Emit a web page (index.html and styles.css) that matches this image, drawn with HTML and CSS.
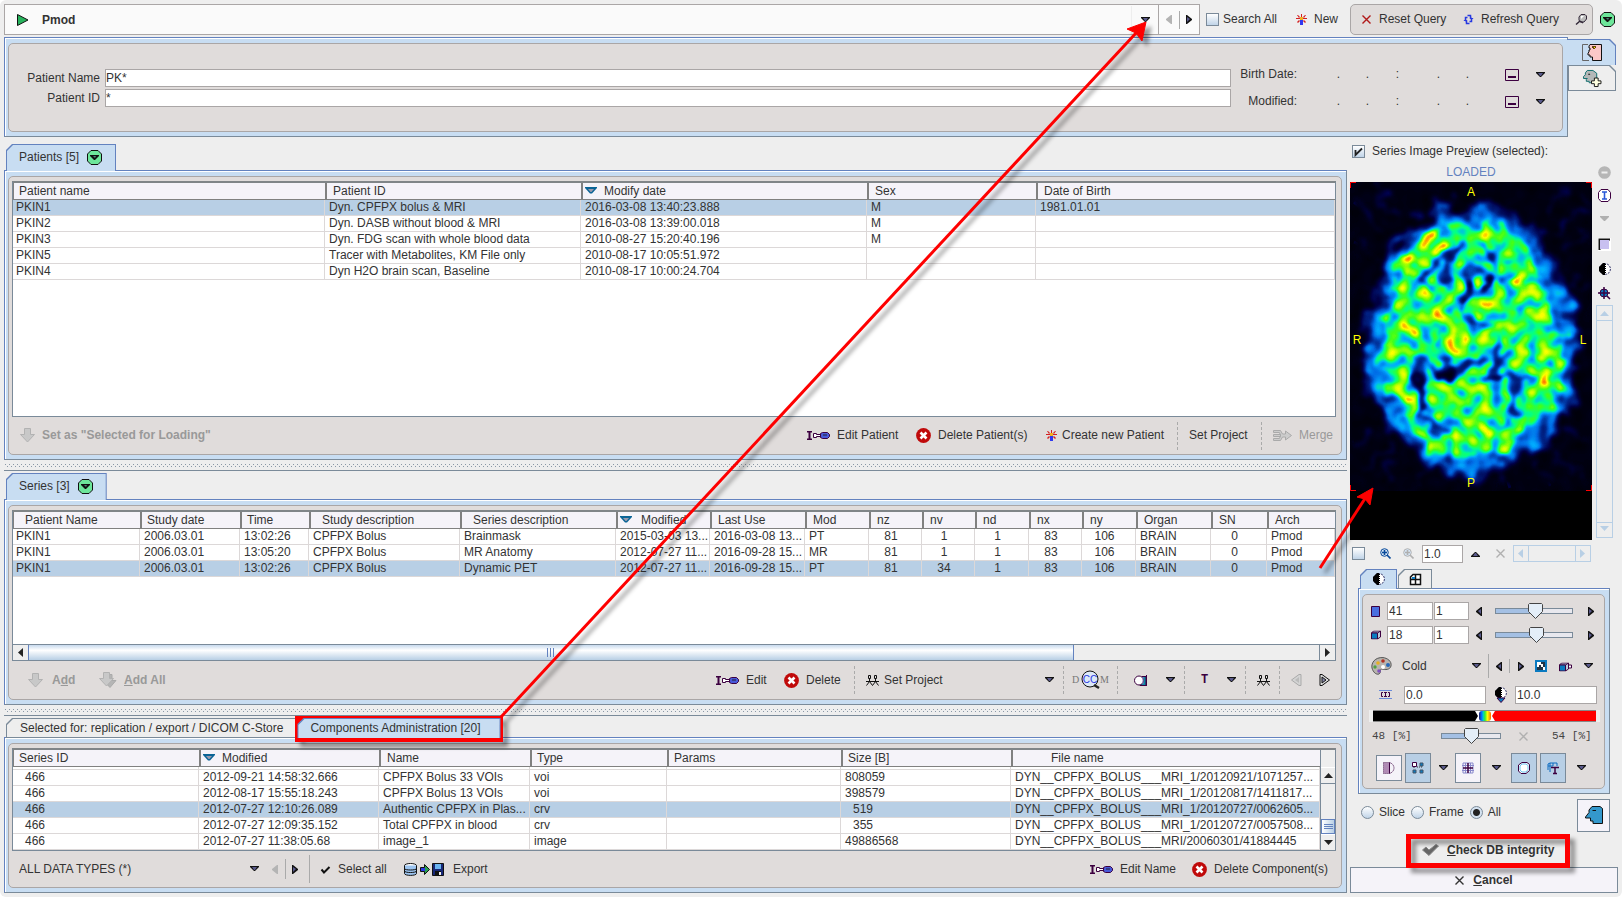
FILE: index.html
```html
<!DOCTYPE html>
<html lang="en">
<head>
<meta charset="utf-8">
<title>Pmod database</title>
<link rel="stylesheet" href="styles.css">
</head>
<body>
<svg class="defs" aria-hidden="true">
  <defs>
    <symbol id="down" viewBox="0 0 9 6"><path d="M0 0h9v1L5 5H4L0 1z" fill="#111"/><path d="M2 1h5L5 4H4z" fill="#5a5a8c"/></symbol>
    <symbol id="up" viewBox="0 0 9 6"><path d="M0 6h9V5L5 1H4L0 5z" fill="#111"/><path d="M2 5h5L5 2H4z" fill="#5a5a8c"/></symbol>
    <symbol id="left" viewBox="0 0 6 9"><path d="M6 0v9H5L0 5V4l5-4z" fill="#111"/><path d="M5 2v5L2 4z" fill="#5a5a8c"/></symbol>
    <symbol id="right" viewBox="0 0 6 9"><path d="M0 0v9h1l5-4V4L1 0z" fill="#111"/><path d="M1 2v5l3-3z" fill="#5a5a8c"/></symbol>
    <symbol id="left-off" viewBox="0 0 6 9"><path d="M6 0v9H5L0 5V4l5-4z" fill="#b4b4b4"/></symbol>
    <symbol id="drop" viewBox="0 0 15 15"><path d="M4 0.5h7L14.500 4v7L11 14.500H4L0.500 11V4z" fill="#6de69a" stroke="#111"/><path d="M3 5h9v1L8 10H7L3 6z" fill="#111"/><path d="M6 6h3L8 8z" fill="#487"/></symbol>
    <symbol id="star" viewBox="0 0 11 11"><path d="M5 0h1v3H5zM1 1l1 0 2 2-1 1zM10 1H9L7 3l1 1zM0 4h4v1H0zM7 4h4v1H7zM1 8l2-2 1 1-2 2zM10 8L8 6 7 7l2 2z" fill="#d42020"/><path d="M4 3h3v3H4z" fill="#f0b020"/><path d="M4 6h3v5H4z" fill="#3038f0"/></symbol>
    <symbol id="edit" viewBox="0 0 23 9"><path d="M0 0h5v1.500H3.500v6H5V9H0V7.500h1.500v-6H0z" fill="#3c0040"/><path d="M6.500 2.500h3v1h4v2h-4v1h-3z" fill="#fff" stroke="#3c0040"/><path d="M13.500 2.500l2-1h5l2 2v2l-2 2h-5l-2-1z" fill="#4858d8" stroke="#3c0040"/><path d="M16 4h4" stroke="#223"/></symbol>
    <symbol id="del" viewBox="0 0 15 15"><circle cx="7.500" cy="7.500" r="7.400" fill="#c00a0a"/><path d="M4.500 4.500l6 6m0-6l-6 6" stroke="#fff" stroke-width="2.600"/></symbol>
    <symbol id="arrow" viewBox="0 0 15 15"><path d="M4.500 0.500h6v6h4L7.500 14 .5 6.500h4z" fill="#c8c8c8" stroke="#b2b2b2"/></symbol>
    <symbol id="arrow2" viewBox="0 0 18 16"><path d="M8 2.500h5v6h4L11 15.500 5 9z" fill="#b5b5b5" stroke="#aaa"/><path d="M4.500 0.500h6v6h4L7.500 14 .5 6.500h4z" fill="#c8c8c8" stroke="#b2b2b2"/></symbol>
    <symbol id="merge" viewBox="0 0 19 11"><path d="M.5.500h7l2 3.500h3V1l6 4.500-6 4.500V7h-3l-2 3.500h-7v-2h6l1-3-1-3h-6zM.5 4.500h7v2h-7z" fill="#ccc" stroke="#aaa"/></symbol>
    <symbol id="sort" viewBox="0 0 12 7"><path d="M0 0h12v1L7 6.500H5L0 1z" fill="#0a6496"/><path d="M3 2h6L6.500 5h-1z" fill="#9a9aae"/></symbol>
    <symbol id="people" viewBox="0 0 13 11"><path d="M2.500.5h2v3h-2zM8.500.5h2v3h-2zM3.500 3v3M9.500 3v3M0 6.500h13M3.500 6.500L.5 10.500M3.500 6.500l3 4M9.500 6.500l-3 4M9.500 6.500l3 4" fill="none" stroke="#111"/></symbol>
    <symbol id="x" viewBox="0 0 9 9"><path d="M.5.5l8 8m0-8l-8 8" stroke="currentColor" stroke-width="1.400"/></symbol>
    <symbol id="half" viewBox="0 0 12 12"><circle cx="6" cy="6" r="5.400" fill="#fff" stroke="#336" stroke-dasharray="2 1"/><path d="M6 0H4L0 4v4l4 4h2z" fill="#000"/><path d="M6.500 1v10" stroke="#000" stroke-dasharray="1 1"/></symbol>
    <symbol id="cube" viewBox="0 0 10 9"><path d="M.5 2.500l2-2h7v6l-3 2v-6z" fill="#bcd" stroke="#3c0040"/><path d="M6.500 2.500l3-2" stroke="#3c0040"/><path d="M.5 2.500h6v6h-6z" fill="#0a7ac0" stroke="#3c0040"/></symbol>
    <symbol id="calendar" viewBox="0 0 14 12"><path d="M.5.5h13v11H.5z" fill="none" stroke="#3c0040"/><path d="M3 7h8v2H3z" fill="#3c0040"/></symbol>
    <symbol id="glass" viewBox="0 0 11 11"><circle cx="4.500" cy="4.500" r="3.800" fill="#d6e6f6" stroke="currentColor"/><path d="M2 4.500h5M4.500 2v5M7 7l3.500 3.500" stroke="currentColor" stroke-width="1.600"/></symbol>

    <filter id="scan" x="0" y="0" width="100%" height="100%" color-interpolation-filters="sRGB">
      <feTurbulence type="fractalNoise" baseFrequency="0.055" numOctaves="2" seed="4" result="warp"/>
      <feDisplacementMap in="SourceGraphic" in2="warp" scale="34" xChannelSelector="R" yChannelSelector="G"/>
      <feGaussianBlur stdDeviation="2" result="warped"/>
      <feFlood flood-color="#060606"/>
      <feComposite in="warped" operator="over" in2="SourceGraphic" result="soft"/>
      <feTurbulence type="fractalNoise" baseFrequency="0.085" numOctaves="1" seed="11"/>
      <feColorMatrix values="1 0 0 0 0  1 0 0 0 0  1 0 0 0 0  0 0 0 0 1" result="noise"/>
      <feComposite in="soft" in2="noise" operator="arithmetic" k1="1.6" k2="0.2" k3="0" k4="0"/>
      <feComponentTransfer>
        <feFuncR type="table" tableValues="0 0 0 0 0 0 .25 .65 1 1 1"/>
        <feFuncG type="table" tableValues="0 0 .15 .42 .68 1 1 1 1 .6 .1"/>
        <feFuncB type="table" tableValues="0 .28 .55 .9 1 .55 .1 0 0 0 0"/>
      </feComponentTransfer>
    </filter>
  </defs>
</svg>

<header class="topbar">
  <div class="source">
    <svg class="play" viewBox="0 0 12 12"><path d="M.5 .5L11 6 .5 11.500z" fill="#26b35c" stroke="#111"/></svg>
    <select class="source-select" aria-label="Database"><option>Pmod</option></select>
    <span class="source-drop"><svg class="c9"><use href="#down"/></svg></span>
  </div>
  <div class="stepper">
    <button aria-label="Previous"><svg class="c6"><use href="#left-off"/></svg></button>
    <button aria-label="Next"><svg class="c6"><use href="#right"/></svg></button>
  </div>
  <label class="check-label search-all"><input type="checkbox">Search All</label>
  <button class="btn new"><svg class="i11"><use href="#star"/></svg>New</button>
  <div class="query">
    <button class="btn reset"><svg class="i9"><use href="#x"/></svg>Reset Query</button>
    <button class="btn refresh"><svg class="i11" viewBox="0 0 11 11"><path d="M2.500 5V3.500h2M4.500 1.500h3v2h1M8.500 6v1.500h-2M6.500 9.500h-3v-2h-1" fill="none" stroke="#2638e0" stroke-width="1.500"/><path d="M6.500 4h4L8.500 6.500zM.5 7h4L2.500 4.500z" fill="#2638e0"/></svg>Refresh Query</button>
    <button class="btn" aria-label="Pin"><svg class="i11" viewBox="0 0 11 11"><path d="M5 .5h4l1.500 1.500v3L8 8H4L3 6V3z" fill="#bbb" stroke="#332838"/><path d="M5 2h3L5 5z" fill="#fff"/><path d="M4 7l3 2M0 10.500L4 7" stroke="#332838" stroke-width="1.500"/></svg></button>
  </div>
  <button class="btn more" aria-label="More"><svg class="i15"><use href="#drop"/></svg></button>
</header>

<section class="search">
  <div class="frame search-frame">
    <div class="inner search-inner">
      <div class="fields">
        <label for="pname">Patient Name</label><input id="pname" type="text" value="PK*">
        <label for="pid">Patient ID</label><input id="pid" type="text" value="*">
      </div>
      <div class="dates">
        <div class="date"><span class="date-name">Birth Date:</span><span>.</span><span>.</span><span>:</span><span>.</span><span>.</span><button aria-label="Birth date calendar"><svg class="cal"><use href="#calendar"/></svg></button><button aria-label="Birth date options"><svg class="c9"><use href="#down"/></svg></button></div>
        <div class="date"><span class="date-name">Modified:</span><span>.</span><span>.</span><span>:</span><span>.</span><span>.</span><button aria-label="Modified calendar"><svg class="cal"><use href="#calendar"/></svg></button><button aria-label="Modified options"><svg class="c9"><use href="#down"/></svg></button></div>
      </div>
    </div>
  </div>
  <div class="side-tabs">
    <button class="tab side on" aria-label="Patient"><svg viewBox="0 0 20 17"><path d="M6 .5H.5v16H7" fill="none" stroke="#666"/><path d="M8 .5h11.500v16h-9V13H8v-2H6V9l1-1V6h1V4H7V2z" fill="#fbc8c8" stroke="#111"/><path d="M10 2h4v2h-1v1h-2V4h-1z" fill="#641"/><path d="M12 3h1v1h-1z" fill="#ff0"/></svg></button>
    <button class="tab side" aria-label="Add patient"><svg viewBox="0 0 20 18"><path d="M5 .5h6l4 3v10H7V12H4v-2l1-1H1V7l2-2V3z" fill="#b4b8b8" stroke="#0a6a6a"/><path d="M6 4h2v1H6z" fill="#111"/><path d="M12.500 8.500h4v3h3v3h-3v3h-4v-3h-3v-3h3z" fill="#ffffe0" stroke="#111"/></svg></button>
  </div>
</section>

<main class="main">
  <div class="left">
    <section class="block grow">
      <div class="tabs"><button class="tab on">Patients [5]<svg class="i15"><use href="#drop"/></svg></button></div>
      <div class="frame">
        <div class="inner">
          <div class="well patients-well">
            <table class="grid">
              <colgroup><col class="w312"><col class="w256"><col class="w286"><col class="w169"><col></colgroup>
              <thead><tr><th>Patient name</th><th>Patient ID</th><th><svg class="sort"><use href="#sort"/></svg>Modify date</th><th>Sex</th><th>Date of Birth</th></tr></thead>
              <tbody>
                <tr class="sel"><td>PKIN1</td><td>Dyn. CPFPX bolus &amp; MRI</td><td>2016-03-08 13:40:23.888</td><td>M</td><td>1981.01.01</td></tr>
                <tr><td>PKIN2</td><td>Dyn. DASB without blood &amp; MRI</td><td>2016-03-08 13:39:00.018</td><td>M</td><td></td></tr>
                <tr><td>PKIN3</td><td>Dyn. FDG scan with whole blood data</td><td>2010-08-27 15:20:40.196</td><td>M</td><td></td></tr>
                <tr><td>PKIN5</td><td>Tracer with Metabolites, KM File only</td><td>2010-08-17 10:05:51.972</td><td></td><td></td></tr>
                <tr><td>PKIN4</td><td>Dyn H2O brain scan, Baseline</td><td>2010-08-17 10:00:24.704</td><td></td><td></td></tr>
              </tbody>
            </table>
          </div>
          <div class="tools patients-tools">
            <button class="btn off bold lead" disabled><svg class="i15"><use href="#arrow"/></svg>Set as "Selected for Loading"</button>
            <button class="btn"><svg class="i23"><use href="#edit"/></svg>Edit Patient</button>
            <button class="btn"><svg class="i15"><use href="#del"/></svg>Delete Patient(s)</button>
            <button class="btn tight"><svg class="i11"><use href="#star"/></svg>Create new Patient</button>
            <button class="btn sep">Set Project</button>
            <button class="btn sep off" disabled><svg class="i19"><use href="#merge"/></svg>Merge</button>
          </div>
        </div>
      </div>
    </section>
    <div class="splitter"></div>
    <section class="block">
      <div class="tabs"><button class="tab on">Series [3]<svg class="i15"><use href="#drop"/></svg></button></div>
      <div class="frame">
        <div class="inner">
          <div class="well series-well">
            <table class="grid">
              <colgroup><col class="w127"><col class="w100"><col class="w69"><col class="w151"><col class="w156"><col class="w94"><col class="w95"><col class="w64"><col class="w53"><col class="w53"><col class="w54"><col class="w53"><col class="w54"><col class="w75"><col class="w56"><col></colgroup>
              <thead><tr><th class="far">Patient Name</th><th class="near">Study date</th><th class="near">Time</th><th class="far">Study description</th><th class="far">Series description</th><th><svg class="sort wide"><use href="#sort"/></svg>Modified</th><th>Last Use</th><th>Mod</th><th>nz</th><th>nv</th><th>nd</th><th>nx</th><th>ny</th><th>Organ</th><th>SN</th><th>Arch</th></tr></thead>
              <tbody>
                <tr><td>PKIN1</td><td>2006.03.01</td><td>13:02:26</td><td>CPFPX Bolus</td><td>Brainmask</td><td>2015-03-03 13...</td><td>2016-03-08 13...</td><td>PT</td><td class="num">81</td><td class="num">1</td><td class="num">1</td><td class="num">83</td><td class="num">106</td><td>BRAIN</td><td class="num">0</td><td>Pmod</td></tr>
                <tr><td>PKIN1</td><td>2006.03.01</td><td>13:05:20</td><td>CPFPX Bolus</td><td>MR Anatomy</td><td>2012-07-27 11...</td><td>2016-09-28 15...</td><td>MR</td><td class="num">81</td><td class="num">1</td><td class="num">1</td><td class="num">83</td><td class="num">106</td><td>BRAIN</td><td class="num">0</td><td>Pmod</td></tr>
                <tr class="sel"><td>PKIN1</td><td>2006.03.01</td><td>13:02:26</td><td>CPFPX Bolus</td><td>Dynamic PET</td><td>2012-07-27 11...</td><td>2016-09-28 15...</td><td>PT</td><td class="num">81</td><td class="num">34</td><td class="num">1</td><td class="num">83</td><td class="num">106</td><td>BRAIN</td><td class="num">0</td><td>Pmod</td></tr>
              </tbody>
            </table>
            <div class="hscroll">
              <button aria-label="Scroll left"><svg class="c6" viewBox="0 0 6 9"><path d="M5 0v9L0 4.500z" fill="#222"/></svg></button>
              <div class="hthumb"><i></i><i></i><i></i></div>
              <div class="htrack"></div>
              <button aria-label="Scroll right"><svg class="c6" viewBox="0 0 6 9"><path d="M0 0v9l5-4.500z" fill="#222"/></svg></button>
            </div>
          </div>
          <div class="tools series-tools">
            <button class="btn off bold add" disabled><svg class="i15"><use href="#arrow"/></svg><span>A<u>d</u>d</span></button>
            <button class="btn off bold" disabled><svg class="i18"><use href="#arrow2"/></svg><span><u>A</u>dd All</span></button>
            <button class="btn"><svg class="i23"><use href="#edit"/></svg>Edit</button>
            <button class="btn"><svg class="i15"><use href="#del"/></svg>Delete</button>
            <div class="sep pair"><button class="btn tight"><svg class="i13"><use href="#people"/></svg>Set Project</button><button aria-label="Project list"><svg class="c9"><use href="#down"/></svg></button></div>
            <button class="btn sep dicom-button" aria-label="DICOM"><svg class="dicom" viewBox="0 0 36 18"><circle cx="18" cy="8" r="8" fill="#dce8f8" stroke="#111"/><path d="M22 14l5 3" stroke="#222" stroke-width="2.500"/><text x="0" y="12" class="dicom-grey">D</text><text x="18" y="12" class="dicom-blue">CC</text><text x="28" y="12" class="dicom-grey">M</text></svg></button>
            <div class="sep pair"><button aria-label="Volume"><svg class="i13" viewBox="0 0 13 11"><path d="M8 1.500h4v9H6z" fill="#0a8aa6" stroke="#3c0040"/><path d="M12.500 0v11" stroke="#3c0040"/><circle cx="5" cy="5.500" r="4.500" fill="#fff" stroke="#3c0040"/><path d="M9 2v7" stroke="#88c"/></svg></button><button aria-label="Volume options"><svg class="c9"><use href="#down"/></svg></button></div>
            <div class="sep pair"><button class="letter">T</button><button aria-label="Text options"><svg class="c9"><use href="#down"/></svg></button></div>
            <button class="btn sep" aria-label="Patients"><svg class="i13"><use href="#people"/></svg></button>
            <div class="sep pair"><button aria-label="Previous"><svg class="nav" viewBox="0 0 11 12"><path d="M10 .5v11H8L.5 6 8 .5z" fill="#d4d4d4" stroke="#aaa"/><path d="M8 3v6L4 6z" fill="#bbb"/></svg></button><button aria-label="Next"><svg class="nav" viewBox="0 0 11 12"><path d="M1 .5v11h2L10.500 6 3 .5z" fill="#ddd" stroke="#111"/><path d="M3 3v6l4-3z" fill="#88a" stroke="#111"/></svg></button></div>
          </div>
        </div>
      </div>
    </section>
    <div class="splitter"></div>
    <section class="block">
      <div class="tabs low"><button class="tab">Selected for: replication / export / DICOM C-Store</button><button class="tab on">Components Administration [20]</button></div>
      <div class="frame">
        <div class="inner">
          <div class="well comp-well">
            <table class="grid">
              <colgroup><col class="w186"><col class="w180"><col class="w151"><col class="w137"><col class="w174"><col class="w170"><col></colgroup>
              <thead><tr><th>Series ID</th><th><svg class="sort"><use href="#sort"/></svg>Modified</th><th>Name</th><th class="near">Type</th><th class="near">Params</th><th class="near">Size [B]</th><th class="file">File name</th></tr></thead>
              <tbody>
                <tr class="cut"><td></td><td></td><td></td><td></td><td></td><td></td><td></td></tr>
                <tr><td class="ind">466</td><td>2012-09-21 14:58:32.666</td><td>CPFPX Bolus 33 VOIs</td><td>voi</td><td></td><td>808059</td><td>DYN__CPFPX_BOLUS___MRI_1/20120921/1071257...</td></tr>
                <tr><td class="ind">466</td><td>2012-08-17 15:55:18.243</td><td>CPFPX Bolus 13 VOIs</td><td>voi</td><td></td><td>398579</td><td>DYN__CPFPX_BOLUS___MRI_1/20120817/1411817...</td></tr>
                <tr class="sel"><td class="ind">466</td><td>2012-07-27 12:10:26.089</td><td>Authentic CPFPX in Plas...</td><td>crv</td><td></td><td class="ind">519</td><td>DYN__CPFPX_BOLUS___MRI_1/20120727/0062605...</td></tr>
                <tr><td class="ind">466</td><td>2012-07-27 12:09:35.152</td><td>Total CPFPX in blood</td><td>crv</td><td></td><td class="ind">355</td><td>DYN__CPFPX_BOLUS___MRI_1/20120727/0057508...</td></tr>
                <tr><td class="ind">466</td><td>2012-07-27 11:38:05.68</td><td>image_1</td><td>image</td><td></td><td>49886568</td><td>DYN__CPFPX_BOLUS___MRI/20060301/41884445</td></tr>
              </tbody>
            </table>
            <div class="vscroll">
              <button aria-label="Scroll up"><svg class="c9" viewBox="0 0 9 6"><path d="M0 5h9L4.500 0z" fill="#222"/></svg></button>
              <div class="vtrack"></div><div class="vthumb"><i></i><i></i><i></i></div>
              <button aria-label="Scroll down"><svg class="c9" viewBox="0 0 9 6"><path d="M0 0h9L4.500 5z" fill="#222"/></svg></button>
            </div>
          </div>
          <div class="tools comp-tools">
            <div class="types"><select aria-label="Data types"><option>ALL DATA TYPES (*)</option></select><svg class="c9"><use href="#down"/></svg></div>
            <button class="step" aria-label="Previous type"><svg class="c6"><use href="#left-off"/></svg></button>
            <button class="step line" aria-label="Next type"><svg class="c6"><use href="#right"/></svg></button>
            <button class="btn line all"><svg class="i9" viewBox="0 0 9 9"><path d="M.5 4.500L3 7.500 8.500 2" fill="none" stroke="#111" stroke-width="2"/></svg>Select all</button>
            <button class="btn"><svg class="export" viewBox="0 0 40 13"><ellipse cx="6.500" cy="2.500" rx="6" ry="2" fill="#fff" stroke="#111"/><path d="M.5 2.500v8c0 2.500 12 2.500 12 0v-8M.5 5.500c0 2 12 2 12 0M.5 8c0 2 12 2 12 0" fill="#9cc4f0" stroke="#111"/><path d="M16.500 4.500h4V1.500l5 5-5 5v-3h-4z" fill="#28a050" stroke="#111"/><path d="M17 5h4v3h-4z" fill="#2838e0"/><path d="M28.500 .5h11v12h-11z" fill="#182878" stroke="#111"/><path d="M31 1h6v5h-6z" fill="#6ab4f0"/><path d="M31 8h6v4h-6z" fill="#111"/><path d="M35 9h2v3h-2z" fill="#eee"/></svg>Export</button>
            <button class="btn"><svg class="i23"><use href="#edit"/></svg>Edit Name</button>
            <button class="btn"><svg class="i15"><use href="#del"/></svg>Delete Component(s)</button>
          </div>
        </div>
      </div>
    </section>
  </div>

  <aside class="right">
    <label class="check-label preview-label"><input type="checkbox" checked><span>Series Image Pre<u>v</u>iew (selected):</span></label>
    <div class="viewer">
      <div class="picture">
        <div class="loaded">LOADED</div>
        <svg class="brain" viewBox="0 0 242 358">
          <rect width="242" height="358" fill="#000"/>
          <g filter="url(#scan)">
            <rect width="242" height="309" fill="#060606"/>
            <g stroke="#1c1c1c" stroke-width="3">
              <path d="M4 20l30 26M20 4l24 30M4 60l24 14M236 14l-24 34M238 54l-26 14M214 6l-14 24M2 260l26-12M10 290l30-26M34 300l14-20M70 304l6-18M238 262l-24-14M230 292l-24-24M200 304l-12-24M160 306l-6-18M10 100l14 4M236 100l-12 4"/>
            </g>
            <path d="M85 24L100 20L115 34L130 18L148 26L172 38L190 55L200 76L212 95L222 120L226 150L231 165L226 190L220 215L210 238L196 264L178 272L160 284L140 288L122 296L102 288L80 284L62 268L42 252L28 225L18 200L12 175L15 150L22 125L34 100L40 74L54 54L72 40z" fill="#4c4c4c" stroke="#262626" stroke-width="5"/>
            <path d="M62 68L76 52L100 46L120 52L140 44L160 50L178 65L184 90L196 120L208 150L212 175L206 210L195 232L172 252L150 266L120 270L92 276L75 258L57 235L42 210L34 180L38 145L46 118L52 90z" fill="#8e8e8e" stroke="#8e8e8e" stroke-width="6" stroke-linejoin="round"/>
            <g fill="none" stroke="#343434" stroke-width="8" stroke-linecap="round">
              <path d="M104 70c-12 8-24 8-27 22M93 84v12M84 108l-6 -14M140 62c0 18 14 26 10 40M124 88l-10 22"/>
              <path d="M150 104l10-10M96 152l-12 10M116 136c10 6 18 4 26 4" stroke-width="6"/>
              <path d="M68 182c8 14-4 32 6 52" stroke-width="12"/><path d="M76 176l18 16 20-6 20-10" stroke-width="8"/>
              <path d="M140 192l38 2M166 196c4 14-6 20-2 34M148 168v14" stroke-width="11"/>
              <path d="M80 240l10 14M153 238v4" stroke-width="9"/>
            </g>
            <g fill="#0c0c0c"><ellipse cx="96" cy="194" rx="8" ry="6"/><ellipse cx="72" cy="210" rx="4" ry="14"/><ellipse cx="150" cy="194" rx="7" ry="5"/><ellipse cx="106" cy="66" rx="4" ry="4"/>
            <ellipse cx="137" cy="99" rx="6" ry="7"/><ellipse cx="116" cy="116" rx="5" ry="6"/><ellipse cx="116" cy="128" rx="6" ry="5"/></g>
            <g fill="#b4b4b4">
              <ellipse cx="134" cy="118" rx="8" ry="11"/><ellipse cx="86" cy="60" rx="11" ry="7"/><ellipse cx="60" cy="84" rx="7" ry="7"/>
              <ellipse cx="108" cy="162" rx="6" ry="16" transform="rotate(30 108 162)"/><ellipse cx="174" cy="102" rx="11" ry="5"/>
              <ellipse cx="46" cy="214" rx="7" ry="7"/><ellipse cx="194" cy="196" rx="6" ry="8"/><ellipse cx="135" cy="243" rx="5" ry="7"/>
              <ellipse cx="104" cy="264" rx="6" ry="9"/><ellipse cx="118" cy="258" rx="5" ry="9"/><ellipse cx="149" cy="266" rx="5" ry="5"/>
              <ellipse cx="58" cy="146" rx="8" ry="6"/><ellipse cx="182" cy="124" rx="5" ry="7"/><ellipse cx="86" cy="140" rx="5" ry="9"/>
              <ellipse cx="152" cy="144" rx="6" ry="7"/><ellipse cx="184" cy="170" rx="7" ry="5"/><ellipse cx="55" cy="108" rx="4" ry="11"/>
            </g>
            <g fill="#e8e8e8"><ellipse cx="132" cy="119" rx="3" ry="5"/><ellipse cx="102" cy="170" rx="3" ry="3"/></g>
          </g>
          <rect y="309" width="242" height="49" fill="#000"/>
          <path d="M.5 6V.5H6M236 .5h5.500V6M.5 303v5.500H6M236 308.500h5.500V303" fill="none" stroke="#f00" stroke-width="1"/>
          <text x="121" y="14" class="mark">A</text><text x="7" y="162" class="mark">R</text><text x="233" y="162" class="mark">L</text><text x="121" y="305" class="mark">P</text>
        </svg>
      </div>
      <div class="strip">
        <button aria-label="Remove"><svg class="i13" viewBox="0 0 13 13"><circle cx="6.500" cy="6.500" r="6.300" fill="#b6b6b6"/><path d="M3.500 6.500h6" stroke="#eee" stroke-width="2"/></svg></button>
        <button aria-label="Info"><svg class="i13" viewBox="0 0 13 13"><path d="M3 .5h7l2.500 3v6l-2.500 3H3l-2.500-3v-6z" fill="#fff" stroke="#3c0040"/><path d="M4 3h5M4 10h5M6.500 3v7" stroke="#2a58d8" stroke-width="1.600"/></svg></button>
        <button aria-label="More"><svg class="c9" viewBox="0 0 9 6"><path d="M0 0h9v1L5 5H4L0 1z" fill="#b0b0b0"/></svg></button>
        <button aria-label="Background"><svg class="i13" viewBox="0 0 13 13"><path d="M0 0h13v13H0z" fill="#fff"/><path d="M1.500 12V1.500H12" fill="none" stroke="#111" stroke-width="2"/><path d="M2 2h9v9H2z" fill="#c8c0f0"/></svg></button>
        <button aria-label="Contrast"><svg class="i12"><use href="#half"/></svg></button>
        <button aria-label="Target"><svg class="i13" viewBox="0 0 13 13"><circle cx="6" cy="6" r="4" fill="#0a7ac0" stroke="#3c0040"/><path d="M0 6h12M6 0v12M9 9l3 3" stroke="#3c0040" stroke-width="1.500"/></svg></button>
        <div class="vbar"><svg class="c9" viewBox="0 0 9 6"><path d="M0 5h9L4.500 0z"/></svg><svg class="c9" viewBox="0 0 9 6"><path d="M0 0h9L4.500 5z"/></svg></div>
      </div>
    </div>
    <div class="zoom">
      <input type="checkbox" aria-label="Zoom lock">
      <button class="zin" aria-label="Zoom in"><svg class="i11"><use href="#glass"/></svg></button>
      <button class="zout" aria-label="Zoom out"><svg class="i11"><use href="#glass"/></svg></button>
      <input type="text" value="1.0" aria-label="Zoom">
      <button aria-label="Zoom step"><svg class="c9"><use href="#up"/></svg></button>
      <button class="zout" aria-label="Clear zoom"><svg class="i9"><use href="#x"/></svg></button>
      <div class="hbar"><svg class="c6" viewBox="0 0 6 9"><path d="M5 0v9L0 4.500z"/></svg><svg class="c6" viewBox="0 0 6 9"><path d="M0 0v9l5-4.500z"/></svg></div>
    </div>
    <div class="colours">
      <div class="tabs"><button class="tab on" aria-label="Colour"><svg class="i12"><use href="#half"/></svg></button><button class="tab" aria-label="Layout"><svg class="i11" viewBox="0 0 11 11"><path d="M.5 3L3 .5h7.500v10H.5zM5.500 0v11M0 5.500h11" fill="#fff" stroke="#111" stroke-width="1.500"/><path d="M2 3h3v2H2z" fill="#0a7ac0"/></svg></button></div>
      <div class="frame">
        <div class="inner colour-inner">
          <div class="slice-row">
            <svg class="slab" viewBox="0 0 9 11"><path d="M.5.5h8v10h-8z" fill="#4a6ee0" stroke="#3c0040"/></svg>
            <input type="text" value="41" aria-label="Slice"><input type="text" value="1" aria-label="Slice step">
            <button aria-label="Previous slice"><svg class="c6"><use href="#left"/></svg></button>
            <input type="range" value="52" aria-label="Slice position">
            <button aria-label="Next slice"><svg class="c6"><use href="#right"/></svg></button>
          </div>
          <div class="slice-row">
            <svg class="cube" viewBox="0 0 10 9"><use href="#cube"/></svg>
            <input type="text" value="18" aria-label="Frame"><input type="text" value="1" aria-label="Frame step">
            <button aria-label="Previous frame"><svg class="c6"><use href="#left"/></svg></button>
            <input type="range" value="54" aria-label="Frame position">
            <button aria-label="Next frame"><svg class="c6"><use href="#right"/></svg></button>
          </div>
          <div class="map-row">
            <svg class="palette" viewBox="0 0 21 18"><path d="M12 .6C4 0 0 6 1 11c1 4 4 7 7 6 3-2 0-5 3-5 3 1 8 1 9-3 1-5-4-8-8-8.400z" fill="#b8b4ae" stroke="#555"/><circle cx="7" cy="6" r="1.800" fill="#e8b020"/><circle cx="12" cy="4" r="1.800" fill="#b03020"/><circle cx="17" cy="8" r="2" fill="#2868b8"/><circle cx="4" cy="10" r="1.700" fill="#50a040"/><circle cx="8" cy="14" r="1.800" fill="#8050c0"/><circle cx="12" cy="10" r="2" fill="#fff"/></svg>
            <select aria-label="Colour table"><option>Cold</option></select>
            <svg class="c9"><use href="#down"/></svg>
            <button class="line" aria-label="Previous table"><svg class="c6"><use href="#left"/></svg></button>
            <button class="line short" aria-label="Next table"><svg class="c6"><use href="#right"/></svg></button>
            <button aria-label="Invert"><svg class="i12" viewBox="0 0 12 12"><path d="M1 1h10v10H1z" fill="#fff" stroke="#0a7ac0" stroke-width="2"/><path d="M6 2h4v5H8V4H6zM4 5h2v2h2v3H2V7h2z" fill="#234"/></svg></button>
            <button aria-label="Cube"><svg class="i13" viewBox="0 0 13 10"><use href="#cube" width="10" height="9" y="1"/><path d="M9.500 3.500h3v3h-3z" fill="#fff" stroke="#3c0040"/></svg></button>
            <button aria-label="Table options"><svg class="c9"><use href="#down"/></svg></button>
          </div>
          <div class="range-row">
            <button aria-label="Range"><svg class="i13" viewBox="0 0 13 9"><path d="M0 .5h13M0 8.500h13" stroke="#6a8ad8"/><path d="M4 2.500H2.500v4H4M9 2.500h1.500v4H9M5 2.500h3M5 6.500h3M6.500 2v5" fill="none" stroke="#3c0040"/></svg></button>
            <input type="text" value="0.0" aria-label="Minimum">
            <button aria-label="Auto range"><svg class="auto" viewBox="0 0 12 16"><use href="#half" width="12" height="12"/><path d="M2 11h8l-4 4.500z" fill="#0a7ac0" stroke="#3c0040"/></svg></button>
            <input type="text" value="10.0" aria-label="Maximum">
          </div>
          <div class="ramp"><div class="ramp-bar"><svg class="ramp-knob" viewBox="0 0 22 10"><path d="M0 0h22v10H0z" fill="#fff"/><path d="M0 0h1l3 5-3 5H0z" fill="#000"/><path d="M22 0h-1l-3 5 3 5h1z" fill="#f00"/></svg><span class="ramp-mid"></span></div></div>
          <div class="level-row"><span>48&nbsp;[%]</span><input type="range" value="52" aria-label="Level"><button class="zout" aria-label="Reset level"><svg class="i9"><use href="#x"/></svg></button><span>54&nbsp;[%]</span></div>
          <div class="toggle-row">
            <button class="toggle small" aria-label="Mask"><svg viewBox="0 0 12 12"><path d="M1 1h5v10H1z" fill="#b08ab4"/><path d="M.5.5h6c6 2 6 9 0 11h-6z" fill="none" stroke="#3c0040" stroke-dasharray="1 1"/><path d="M6.500.5v11" stroke="#3c0040"/></svg></button>
            <button class="toggle down" aria-label="Markers"><svg viewBox="0 0 12 12"><path d="M.5.5h4v4h-4z" fill="#fff" stroke="#3c0040"/><path d="M8 1h3v3H8zM1 8h3v3H1zM8 8h3v3H8z" fill="#0a7ac0" stroke="#456"/><path d="M5 5h5M2 5v2" stroke="#333" stroke-dasharray="1 1"/></svg></button>
            <button aria-label="Marker options"><svg class="c9"><use href="#down"/></svg></button>
            <button class="toggle" aria-label="Grid"><svg viewBox="0 0 12 12"><path d="M1 1h10v10H1z" fill="none" stroke="#88c"/><path d="M0 3.500h12M0 8.500h12M3.500 1v10M8.500 1v10" stroke="#88c"/><path d="M1 6h10M6 1v10" stroke="#3c0040" stroke-width="1.500"/></svg></button>
            <button aria-label="Grid options"><svg class="c9"><use href="#down"/></svg></button>
            <button class="toggle down" aria-label="Contour"><svg viewBox="0 0 12 12"><path d="M4 .5h5l2.500 2v6L8 11.500H3L.5 9V3z" fill="#fff" stroke="#3c0040"/><path d="M4 2h4l2 1.500v4L8 10H4L2 8V4z" fill="none" stroke="#6ac4f0"/></svg></button>
            <button class="toggle down" aria-label="Annotations"><svg viewBox="0 0 12 12"><path d="M1 8V2l2-1h7v3M3 1v9M6 1v3M1 4h5" fill="none" stroke="#0a6ac0"/><path d="M4 5.500h8M8 5v7M6 11.500h4" stroke="#3c0040" stroke-width="1.500"/></svg></button>
            <button aria-label="Annotation options"><svg class="c9"><use href="#down"/></svg></button>
          </div>
        </div>
      </div>
    </div>
    <div class="scope">
      <label><input type="radio" name="scope">Slice</label>
      <label><input type="radio" name="scope">Frame</label>
      <label><input type="radio" name="scope" checked>All</label>
      <button class="face" aria-label="Orientation"><svg viewBox="0 0 18 18"><path d="M7 .5h8l2.500 2v15H8V15H5.500v-3H.5v-1L4 6.500V4z" fill="#3498cc" stroke="#111"/><path d="M7 4h4v1H8z" fill="#111"/></svg></button>
    </div>
    <button class="btn bold integrity"><svg class="tick" viewBox="0 0 17 12"><path d="M.5 6L4 3l3 3 7-5.500 2.500 1.500L7 11.500z" fill="#666" stroke="#888"/></svg><span><u>C</u>heck DB integrity</span></button>
    <button class="btn bold cancel"><svg class="i9"><use href="#x"/></svg><span><u>C</u>ancel</span></button>
  </aside>
</main>

<svg class="notes" viewBox="0 0 1622 897" aria-hidden="true">
  <g class="note">
    <path d="M297.500 718.500h203v21h-203z"/>
    <path d="M501 717L1137 32"/><path class="head" d="M1146 22l-19 7 9 4 6 8z"/>
  </g>
  <g class="note">
    <path d="M1408.500 836.500h159v29h-159z"/>
    <path d="M1320 568L1366 497"/><path class="head" d="M1373 488l-16 9 8 2 5 6z"/>
  </g>
</svg>
</body>
</html>
```

FILE: styles.css
```css
* { box-sizing: border-box; }
html { background: #fff; }
body {
  margin: 0; padding: 4px; min-height: 100vh; position: relative;
  display: flex; flex-direction: column;
  background: #eee; border-radius: 6px;
  font: 12px/15px "Liberation Sans", Arial, sans-serif; color: #333;
}
.defs { position: absolute; width: 0; height: 0; }
svg { display: block; flex: none; overflow: visible; }
button, select, input { font: inherit; color: inherit; margin: 0; }
button { border: 0; padding: 0; background: none; display: flex; align-items: center; justify-content: center; }
select { appearance: none; border: 0; background: none; padding: 0; outline: 0; min-width: 0; }
input[type="text"] { border: 1px solid #aaa6a6; background: #fff; padding: 0 1px; height: 18px; min-width: 0; width: 100%; border-radius: 0; }
input[type="checkbox"], input[type="radio"] {
  appearance: none; flex: none; width: 13px; height: 13px;
  border: 1px solid #7a8a99; background: linear-gradient(#fff, #c0d4e8);
}
input[type="checkbox"]:checked {
  background: url("data:image/svg+xml,%3Csvg xmlns='http://www.w3.org/2000/svg' viewBox='0 0 11 11'%3E%3Cpath d='M2.500 4v5L9 2.500' fill='none' stroke='%23222' stroke-width='1.800'/%3E%3C/svg%3E"), linear-gradient(#fff, #c0d4e8);
}
input[type="radio"] { border-radius: 50%; }
input[type="radio"]:checked { background: radial-gradient(circle, #222 3px, #d4e2f0 4px); }
input[type="range"] { appearance: none; width: 100%; height: 16px; background: none; min-width: 0; }
input[type="range"]::-webkit-slider-runnable-track {
  height: 6px; border: 1px solid #7a8a99;
  background: linear-gradient(90deg, #a4c0e4 50%, #e8e8ee 50%);
}
input[type="range"]::-webkit-slider-thumb {
  appearance: none; width: 15px; height: 16px; margin-top: -6px;
  background: url("data:image/svg+xml,%3Csvg xmlns='http://www.w3.org/2000/svg' viewBox='0 0 15 16'%3E%3Cpath d='M1.500.5h12l1 1v7l-7 7-7-7v-7z' fill='%23e4eef8' stroke='%23444'/%3E%3C/svg%3E");
}

.c9 { width: 9px; height: 6px; }
.c6 { width: 6px; height: 9px; }
.i9 { width: 9px; height: 9px; }
.i11 { width: 11px; height: 11px; }
.i12 { width: 12px; height: 12px; }
.i13 { width: 13px; height: 13px; }
.i15 { width: 15px; height: 15px; }
.i18 { width: 18px; height: 16px; }
.i19 { width: 19px; height: 11px; }
.i23 { width: 23px; height: 9px; }
.btn { gap: 7px; justify-content: flex-start; white-space: nowrap; }
.bold { font-weight: bold; }
.off { color: #999; }

/* top bar */
.topbar { display: flex; align-items: center; height: 31px; }
.source { flex: 1; display: flex; align-items: center; height: 31px; padding-top: 1px; border: 1px solid #aaa6a6; background: #fafafa; padding-left: 12px; }
.play { width: 12px; height: 12px; margin-right: 13px; }
.source-select { flex: 1; font-weight: bold; }
.source-drop { width: 27px; height: 28px; border-left: 1px solid #eee; display: flex; align-items: center; justify-content: center; }
.stepper { display: flex; align-items: center; width: 41px; height: 31px; border: 1px solid #aaa6a6; border-left: 0; background: #fafafa; }
.stepper button { flex: 1; height: 18px; }
.stepper button + button { border-left: 1px solid #aaa; }
.check-label { display: flex; align-items: center; gap: 4px; }
.search-all { width: 89px; padding-left: 6px; }
.new { width: 61px; padding-left: 7px; }
.query { display: grid; grid-template-columns: 101px 113px 1fr; width: 243px; height: 31px; padding-left: 11px; border: 1px solid #aaa6a6; border-radius: 5px; background: #e0dcdb; }
.reset svg { color: #b01818; margin-right: 1px; }
.more { margin: 0 3px 0 7px; }

/* query form */
.search { display: flex; margin-top: 2px; }
.frame { border: 1px solid #6382bf; border-right-color: #7a8a99; border-bottom-color: #7a8a99; background: #c8ddf2; padding: 5px 4px 4px 3px; box-shadow: inset 1px 1px #fff; }
.inner { border: 1px solid #aaa6a6; border-radius: 5px; background: #e0dcdb; padding: 4px 5px 0 3px; }
.search-frame { flex: 1; }
.search-inner { display: flex; height: 89px; padding: 0 17px 0 4px; }
.fields { flex: 1; align-self: center; display: grid; grid-template-columns: 87px 1fr; gap: 2px 5px; }
.fields label { text-align: right; line-height: 18px; }
.fields input { padding: 0; }
.dates { width: 314px; padding-top: 17px; display: grid; grid-template-rows: 27px 27px; }
.date { display: grid; grid-template-columns: 66px 43px 29px 30px 41px 29px 50px 1fr; align-items: center; line-height: 27px; }
.date span { text-align: right; }
.date button { justify-content: flex-end; }
.cal { width: 14px; height: 12px; }
.side-tabs { width: 50px; padding-top: 2px; }

/* tabs */
.tabs { display: flex; padding-left: 2px; }
.tab {
  position: relative; isolation: isolate; height: 27px; padding: 0 14px 0 13px; gap: 8px; margin-bottom: -1px;
  background: #7a8a99; clip-path: polygon(0 6px, 6px 0, 100% 0, 100% 100%, 0 100%);
  white-space: nowrap;
}
.tab::before {
  content: ""; position: absolute; z-index: -1; inset: 1px; background: #eee;
  clip-path: polygon(0 6px, 6px 0, 100% 0, 100% 100%, 0 100%);
}
.tab.on { background: #6382bf; z-index: 1; }
.tab.on::before { background: #c8ddf2; bottom: 0; }
.tab.side { width: 48px; height: 26px; margin: 0; padding: 0; clip-path: polygon(0 0, calc(100% - 6px) 0, 100% 6px, 100% 100%, 0 100%); }
.tab.side::before { clip-path: polygon(0 0, calc(100% - 6px) 0, 100% 6px, 100% 100%, 0 100%); }
.tab.side.on { margin-left: -1px; width: 49px; }
.tab.side.on::before { left: 0; }
.side svg { width: 20px; height: 17px; }
.low .tab { height: 20px; padding: 0 14px; }
.low .tab.on { padding: 0 20px 0 13px; }

/* main */
.main { flex: 1; display: flex; gap: 3px; margin-top: 7px; }
.left { flex: 1; min-width: 0; display: flex; flex-direction: column; }
.block { display: flex; flex-direction: column; }
.block .frame { flex: 1; display: flex; flex-direction: column; }
.block .inner { flex: 1; display: flex; flex-direction: column; }
.grow { flex: 1; }
.splitter {
  height: 11px; border-bottom: 1px solid #7a8a99; margin-bottom: 2px;
  background:
    conic-gradient(from 270deg at 1px 1px, #8a98a6 90deg, transparent 0) 5px 4px / 4px 4px repeat-x,
    conic-gradient(from 270deg at 1px 1px, #8a98a6 90deg, transparent 0) 7px 6px / 4px 4px repeat-x;
}
.well { background: #fff; border: 1px solid #7a8a99; border-top: 2px solid #808588; position: relative; }
.patients-well { flex: 1; }
.series-well { height: 151px; display: flex; flex-direction: column; justify-content: space-between; }
.comp-well { display: flex; background: #eee; }
.grid { width: 100%; table-layout: fixed; border-collapse: separate; border-spacing: 0; background: #fff; }
.grid th {
  height: 17px; padding: 0 0 0 6px; text-align: left; font-weight: normal; line-height: 16px;
  background: #f5f3f9; border-bottom: 1px solid #808080; border-left: 2px solid #808080; white-space: nowrap; overflow: hidden;
}
.grid th:first-child { border-left-width: 1px; }
.grid th:first-child:not(.far) { padding-left: 5px; }
.grid th.far { padding-left: 11px; }
.grid th.near { padding-left: 5px; }
.grid th.file { padding-left: 38px; }
.grid td { height: 16px; padding: 0 0 0 4px; line-height: 15px; border-bottom: 1px solid #dcd8d8; border-right: 1px solid #dcd8d8; white-space: nowrap; overflow: hidden; }
.grid td:first-child { padding-left: 3px; }
.grid td.num { text-align: center; padding: 0 8px 0 0; }
.grid td.ind { padding-left: 12px; }
.grid .sel td { background: #b8cfe5; }
.grid .cut td { height: 3px; }
.sort { display: inline-block; width: 12px; height: 7px; margin: 0 7px 1px -4px; }
.sort.wide { margin-right: 9px; }
.w312 { width: 312px; } .w256 { width: 256px; } .w286 { width: 286px; } .w169 { width: 169px; }
.w127 { width: 127px; } .w100 { width: 100px; } .w69 { width: 69px; } .w151 { width: 151px; }
.w156 { width: 156px; } .w94 { width: 94px; } .w95 { width: 95px; } .w64 { width: 64px; }
.w53 { width: 53px; } .w54 { width: 54px; } .w75 { width: 75px; } .w56 { width: 56px; }
.w186 { width: 186px; } .w180 { width: 180px; } .w137 { width: 137px; } .w174 { width: 174px; } .w170 { width: 170px; }

.hscroll { display: flex; height: 16px; border-top: 1px solid #7a8a99; background: #eee; }
.hscroll button { width: 15px; }
.hthumb { flex: 1046; border: 1px solid #6382bf; border-width: 0 1px; background: linear-gradient(#c8daee, #fff 35%, #b8cfe5); display: flex; gap: 2px; justify-content: center; align-items: center; }
.hthumb i { width: 1px; height: 9px; background: #6382bf; }
.htrack { flex: 246; border-right: 1px solid #7a8a99; }
.vscroll { width: 15px; flex: none; display: flex; flex-direction: column; padding-top: 17px; border-left: 1px solid #7a8a99; }
.vscroll button { height: 16px; border-top: 1px solid #fff; }
.vtrack { flex: 1; border-top: 1px solid #7a8a99; }
.vthumb { height: 15px; border: 1px solid #6382bf; background: linear-gradient(90deg, #fff, #b8cfe5); display: flex; flex-direction: column; gap: 1px; align-items: center; justify-content: center; }
.vthumb i { width: 9px; height: 1px; background: #6382bf; }

.tools { display: grid; align-items: center; }
.tools button { height: 28px; }
.patients-tools { height: 37px; grid-template-columns: 1fr 109px 130px 131px 84px 75px; }
.series-tools { height: 38px; grid-template-columns: 87px 1fr 68px 70px 209px 54px 67px 61px 34px 57px; }
.comp-tools { height: 36px; grid-template-columns: 253px 20px 24px 95px 1fr 102px 144px; }
.lead { padding-left: 8px; }
.add { padding-left: 16px; gap: 9px; }
.tight { gap: 5px; }
.tools .sep { border-left: 1px dashed #aaa; padding-left: 11px; }
.tools .pair { display: flex; height: 28px; justify-content: space-between; padding-right: 9px; }
.tools .pair:nth-child(n+7) { padding-left: 16px; }
.tools .pair:last-child { padding: 0 6px 0 11px; }
.tools .dicom-button { padding-left: 8px; }
.nav { width: 11px; height: 12px; }
.letter { font: bold 12px/15px "Liberation Mono", monospace; color: #3c0040; }
.dicom { width: 36px; height: 18px; }
.dicom-grey { font: 10px "Liberation Serif", serif; fill: #777; }
.dicom-blue { font: 10px "Liberation Sans", sans-serif; fill: #2a38e0; text-anchor: middle; }
.types { display: flex; align-items: center; padding: 0 6px 0 7px; }
.types select { flex: 1; }
.line { border-left: 1px solid #aaa; }
.tools .step { height: 20px; }
.tools .step.line { padding-right: 5px; }
.all { padding-left: 11px; gap: 8px; }
.export { width: 40px; height: 13px; margin-right: 2px; }

/* preview column */
.right { width: 268px; flex: none; display: flex; flex-direction: column; }
.preview-label { height: 15px; gap: 7px; padding-left: 2px; }
.viewer { display: flex; gap: 3px; margin-top: 6px; }
.loaded { text-align: center; color: #6382bf; height: 17px; line-height: 15px; }
.brain { width: 242px; height: 358px; }
.mark { font: 12px "Liberation Sans", sans-serif; fill: #ff0; text-anchor: middle; }
.strip { width: 19px; display: flex; flex-direction: column; align-items: center; }
.strip button { height: 24px; width: 19px; }
.strip button:first-child { height: 14px; margin-bottom: 4px; }
.strip button:nth-child(4) { height: 26px; }
.vbar, .hbar { border: 1px solid #b8cfe5; fill: #b8cfe5; display: flex; justify-content: space-between; align-items: center; }
.vbar { flex: 1; width: 17px; margin-bottom: 2px; padding: 5px 0; flex-direction: column;
  background: linear-gradient(#b8cfe5, #b8cfe5) 0 14px / 100% 1px no-repeat, linear-gradient(#b8cfe5, #b8cfe5) 0 calc(100% - 14px) / 100% 1px no-repeat; }
.hbar { height: 17px; padding: 0 4px;
  background: linear-gradient(#b8cfe5, #b8cfe5) 14px 0 / 1px 100% no-repeat, linear-gradient(#b8cfe5, #b8cfe5) calc(100% - 14px) 0 / 1px 100% no-repeat; }
.zoom { display: grid; grid-template-columns: 24px 18px 28px 41px 24px 26px 78px; align-items: center; padding-left: 2px; margin-top: 4px; height: 19px; }
.zin { color: #0a4a9a; }
.zout { color: #b0b0b0; }

.colours { padding: 6px 8px 0 8px; }
.colours .tab { height: 20px; width: 37px; padding: 0; margin-right: 1px; }
.colours .tab + .tab { width: 34px; }
.colour-inner { padding: 7px 7px 5px 8px; }
.slice-row { display: grid; grid-template-columns: 16px 46px 36px 26px 78px 1fr; align-items: center; height: 18px; margin-bottom: 6px; }
.slice-row input[type="text"] + input[type="text"] { margin-left: 1px; width: 35px; }
.slice-row button { justify-content: flex-start; padding-left: 7px; }
.slice-row button:last-child { justify-content: flex-end; padding-right: 3px; }
.slab { width: 9px; height: 11px; }
.cube { width: 10px; height: 10px; }
.map-row { display: grid; grid-template-columns: 31px 1fr 16px 21px 22px 20px 28px 18px; align-items: center; height: 24px; margin: 10px 0 7px; }
.map-row .line { height: 24px; }
.map-row .short { height: 14px; }
.palette { width: 21px; height: 18px; }
.range-row { display: grid; grid-template-columns: 33px 82px 29px 82px; align-items: center; height: 19px; }
.range-row button:first-child { padding-right: 5px; }
.auto { width: 12px; height: 16px; }
.ramp { margin: 6px -3px 0 -2px; padding: 0 4px; background: #eee; }
.ramp-bar { height: 12px; border: 1px solid #888; border-width: 1px 0; background: linear-gradient(90deg, #000 50%, #f00 50%); display: grid; justify-content: center; }
.ramp-knob, .ramp-mid { grid-area: 1 / 1; height: 10px; align-self: center; justify-self: center; }
.ramp-knob { width: 22px; }
.ramp-mid { width: 12px; border-radius: 3px; background: linear-gradient(90deg, #226, #06f 20%, #0cc 35%, #3e3 50%, #ff0 70%, #f60); }
.level-row { display: grid; grid-template-columns: 69px 60px 44px 1fr; align-items: center; height: 28px; padding-left: 1px; font: 11px/15px "Liberation Mono", monospace; color: #444; }
.level-row span:last-child { padding-left: 7px; white-space: nowrap; }
.toggle-row { display: grid; grid-template-columns: 29px 26px 24px 26px 30px 29px 26px 1fr; align-items: center; padding-left: 5px; margin-top: 3px; height: 30px; }
.toggle { width: 26px; height: 30px; border: 1px solid #7a8a99; background: #f5f3f9; }
.toggle svg { width: 12px; height: 12px; }
.toggle.small { height: 26px; }
.toggle.down { background: #b8cfe5; }

.scope { display: flex; align-items: center; gap: 6px; padding: 4px 8px 0 11px; height: 38px; }
.scope label { display: flex; align-items: center; gap: 5px; margin-top: -6px; }
.face { width: 33px; height: 33px; margin-left: auto; border: 1px solid #7a8a99; background: #f5f3f9; }
.face svg { width: 18px; height: 18px; }
.integrity { height: 30px; margin: 3px 0 0 72px; gap: 8px; align-self: flex-start; }
.tick { width: 17px; height: 12px; }
.cancel { height: 26px; margin-top: auto; justify-content: center; gap: 9px; border: 1px solid #7a8a99; background: #f5f3f9; color: #333; }

/* annotations over the window */
.notes { position: absolute; left: 0; top: 0; width: 1622px; height: 897px; pointer-events: none; }
.note { fill: none; stroke: #fe0000; stroke-width: 3; filter: drop-shadow(5px 5px 2px rgba(0, 0, 0, .4)); }
.note path:first-child { stroke-width: 5; }
.note .head { fill: #fe0000; stroke-width: 1; }
```
